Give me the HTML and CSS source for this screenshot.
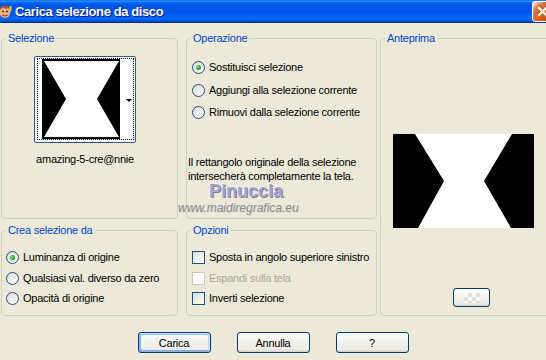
FILE: index.html
```html
<!DOCTYPE html>
<html lang="it">
<head>
<meta charset="utf-8">
<title>Carica selezione da disco</title>
<link rel="stylesheet" href="styles.css">
</head>
<body>
<div class="window">
  <div class="titlebar">
    <svg class="app-icon" width="14" height="15" viewBox="0 0 14 15">
      <ellipse cx="7" cy="8" rx="5.5" ry="6" fill="#f0b070"/>
      <path d="M1.5 6 Q3 1 7 1.5 Q12 1 12.5 6 L10 4 L8 5 L5 3.5 Z" fill="#a0522d"/>
      <circle cx="5" cy="7.5" r="1" fill="#203080"/>
      <circle cx="9" cy="7.5" r="1" fill="#203080"/>
      <path d="M4.5 11 Q7 13 9.5 11" stroke="#c02020" stroke-width="1.2" fill="none"/>
      <rect x="0" y="9" width="2" height="4" fill="#3070e0"/>
      <rect x="11.5" y="2" width="2" height="5" fill="#e0d040"/>
    </svg>
    <span class="title">Carica selezione da disco</span>
    <div class="close">
      <svg width="13" height="13" viewBox="0 0 13 13"><path d="M3 3 L10 10 M10 3 L3 10" stroke="#fff" stroke-width="2" stroke-linecap="square"/></svg>
    </div>
  </div>

  <div class="client">
    <div class="main">
      <div class="left">
        <section class="group">
          <div class="gtitle">Selezione</div>
          <div class="thumb-wrap">
            <div class="combo">
              <div class="focus">
                <svg class="thumb" width="78" height="80" viewBox="0 0 78 80">
                  <rect width="78" height="80" fill="#000"/>
                  <polygon points="2,2 77,2 55,40 77,78 2,78 24,40" fill="#fff"/>
                </svg>
                <span class="arrow"></span>
              </div>
            </div>
            <div class="thumb-name">amazing-5-cre@nnie</div>
          </div>
        </section>

        <section class="group">
          <div class="gtitle">Operazione</div>
          <div class="options op-list">
            <div class="row"><span class="radio checked"></span><span>Sostituisci selezione</span></div>
            <div class="row r2"><span class="radio"></span><span>Aggiungi alla selezione corrente</span></div>
            <div class="row r3"><span class="radio"></span><span>Rimuovi dalla selezione corrente</span></div>
          </div>
          <p class="info">Il rettangolo originale della selezione<br>intersecherà completamente la tela.</p>
        </section>

        <section class="group">
          <div class="gtitle">Crea selezione da</div>
          <div class="options crea-list">
            <div class="row"><span class="radio checked"></span><span>Luminanza di origine</span></div>
            <div class="row r2b"><span class="radio"></span><span>Qualsiasi val. diverso da zero</span></div>
            <div class="row r3b"><span class="radio"></span><span>Opacità di origine</span></div>
          </div>
        </section>

        <section class="group">
          <div class="gtitle">Opzioni</div>
          <div class="options opz-list">
            <div class="row"><span class="check"></span><span>Sposta in angolo superiore sinistro</span></div>
            <div class="row r2b disabled"><span class="check"></span><span>Espandi sulla tela</span></div>
            <div class="row r3b"><span class="check"></span><span>Inverti selezione</span></div>
          </div>
        </section>
      </div>

      <section class="group preview-group">
        <div class="gtitle">Anteprima</div>
        <svg class="preview" width="141" height="94" viewBox="0 0 141 94">
          <rect width="141" height="94" fill="#000"/>
          <polygon points="22,0 119,0 91,47 118,94 25,94 51,47" fill="#fff"/>
        </svg>
        <div class="btn small-btn"><span class="checker"></span></div>
      </section>
    </div>

    <div class="buttons">
      <div class="btn default">Carica</div>
      <div class="btn">Annulla</div>
      <div class="btn">?</div>
    </div>
  </div>

  <div class="watermark">
    <div class="wm-name">Pinuccia</div>
    <div class="wm-url">www.maidiregrafica.eu</div>
  </div>
</div>
</body>
</html>
```

FILE: styles.css
```css
html, body {
  margin: 0;
  padding: 0;
  overflow: hidden;
  background: #ECE9D8;
}

body {
  width: 546px;
  height: 360px;
  font-family: "Liberation Sans", Arial, sans-serif;
  font-size: 11px;
  line-height: 14px;
  letter-spacing: -0.25px;
  color: #000;
}

.window {
  position: relative;
  width: 546px;
  height: 360px;
  overflow: hidden;
}

/* ---------- title bar ---------- */
.titlebar {
  height: 23px;
  display: flex;
  align-items: center;
  background: linear-gradient(180deg, #0058EE 0%, #3593FF 4%, #288EFF 6%, #127DFF 8%, #036FFC 10%, #0262EE 14%, #0057E5 20%, #0054E3 24%, #0055EB 56%, #005BF5 66%, #026AFE 76%, #0062EF 86%, #0052D6 92%, #0040AB 94%, #003092 100%);
}

.app-icon {
  flex-shrink: 0;
  margin-left: -2px;
  margin-top: -1px;
}

.title {
  margin-left: 3px;
  color: #fff;
  font-weight: bold;
  font-size: 13px;
  letter-spacing: -0.4px;
  text-shadow: 1px 1px #0F1089;
  white-space: nowrap;
}

.close {
  flex-shrink: 0;
  margin-left: auto;
  margin-right: -7px;
  width: 21px;
  height: 21px;
  box-sizing: border-box;
  border: 1px solid #fff;
  border-radius: 3px;
  display: flex;
  align-items: center;
  justify-content: center;
  background: radial-gradient(circle at 90% 90%, #CC4600 0%, #DC6527 55%, #CD7546 70%, #FFCCB2 90%, #fff 100%);
}

/* ---------- client ---------- */
.client {
  padding: 15px 0 0 1px;
}

.main {
  display: flex;
  align-items: flex-start;
}

.left {
  flex-shrink: 0;
  display: grid;
  grid-template-columns: 177px 191px;
  grid-template-rows: 181px 86px;
  column-gap: 8px;
  row-gap: 11px;
}

.group {
  box-sizing: border-box;
  border: 1px solid #D0D0BF;
  border-radius: 4px;
}

.gtitle {
  width: max-content;
  margin: -8px 0 0 4px;
  padding: 0 2px;
  background: #ECE9D8;
  color: #0046D5;
  line-height: 14px;
}

/* ---------- selezione ---------- */
.thumb-wrap {
  width: 102px;
  margin: 11px 0 0 32px;
  display: flex;
  flex-direction: column;
  align-items: center;
}

.combo {
  width: 102px;
  height: 87px;
  box-sizing: border-box;
  border: 1px solid #2E5E8E;
  border-radius: 2px;
  background: #fff;
  padding: 1px 1px 2px 2px;
}

.focus {
  box-sizing: border-box;
  width: 97px;
  height: 82px;
  border: 1px dotted #000;
  display: flex;
  align-items: center;
  padding-left: 4px;
}

.thumb {
  display: block;
  flex-shrink: 0;
}

.arrow {
  margin-left: auto;
  margin-right: 1px;
  margin-top: 2px;
  width: 0;
  height: 0;
  border-top: 3px solid #000;
  border-left: 3px solid transparent;
  border-right: 3px solid transparent;
}

.thumb-name {
  margin-top: 9px;
  white-space: nowrap;
}

/* ---------- radios / checks ---------- */
.row {
  display: flex;
  align-items: center;
  gap: 4px;
  height: 16px;
  white-space: nowrap;
}

.op-list {
  margin: 14px 0 0 5px;
}

.op-list .r2 { margin-top: 7px; }
.op-list .r3 { margin-top: 6px; }

.crea-list {
  margin: 12px 0 0 4px;
}

.opz-list {
  margin: 12px 0 0 5px;
}

.r2b { margin-top: 5px; }
.r3b { margin-top: 4px; }

.radio {
  flex-shrink: 0;
  box-sizing: border-box;
  width: 13px;
  height: 13px;
  border-radius: 50%;
  border: 1px solid #1C5180;
  background: linear-gradient(135deg, #DCDCD7 0%, #FFFFFF 100%);
  display: flex;
  align-items: center;
  justify-content: center;
}

.radio.checked::after {
  content: "";
  width: 5px;
  height: 5px;
  border-radius: 50%;
  background: radial-gradient(circle at 35% 35%, #7BE07A 0%, #2FB52D 50%, #18951A 100%);
}

.check {
  flex-shrink: 0;
  box-sizing: border-box;
  width: 13px;
  height: 13px;
  border: 1px solid #1C5180;
  background: linear-gradient(135deg, #DCDCD7 0%, #FFFFFF 100%);
}

.disabled {
  color: #ACA899;
}

.disabled .check {
  border-color: #CAC8BB;
  background: #fff;
}

.info {
  margin: 35px 0 0 1px;
  white-space: nowrap;
}

/* ---------- anteprima ---------- */
.preview-group {
  flex-shrink: 0;
  width: 172px;
  height: 278px;
  margin-left: 3px;
}

.preview {
  display: block;
  margin: 89px 0 0 12px;
}

/* ---------- buttons ---------- */
.buttons {
  margin-top: 16px;
  margin-left: -1px;
  display: flex;
  justify-content: center;
  gap: 26px;
}

.btn {
  box-sizing: border-box;
  width: 73px;
  height: 21px;
  border: 1px solid #003C74;
  border-radius: 3px;
  background: linear-gradient(180deg, #FFFFFF 0%, #F3F3EF 40%, #ECEBE6 86%, #D6D0C5 100%);
  display: flex;
  align-items: center;
  justify-content: center;
}

.btn.default {
  box-shadow: inset -1px 1px #CEE7FF, inset 1px 2px #98B8EA, inset -2px 2px #BCD4F6, inset 1px -1px #89ADE4, inset 2px -2px #89ADE4;
}

.btn.small-btn {
  width: 37px;
  height: 19px;
  margin: 60px 0 0 72px;
}

.checker {
  width: 16px;
  height: 10px;
  opacity: 0.5;
  background: repeating-conic-gradient(#cfcfcf 0% 25%, #ffffff 0% 50%) 0 0 / 8px 8px;
  filter: blur(0.7px);
}

/* ---------- watermark ---------- */
.watermark {
  position: absolute;
  left: 178px;
  top: 184px;
  pointer-events: none;
}

.wm-name {
  margin-left: 31px;
  font-weight: bold;
  font-size: 18px;
  line-height: 14px;
  letter-spacing: 0;
  color: #A6A6CA;
  text-shadow: 1px 1px 0 #7A7A98, -1px -1px 0 #F4F4FA;
}

.wm-url {
  margin-top: 3px;
  font-style: italic;
  font-size: 12px;
  line-height: 14px;
  letter-spacing: 0;
  color: #8C8C8C;
  text-shadow: 1px 1px 0 #D8D8D8;
}
```
